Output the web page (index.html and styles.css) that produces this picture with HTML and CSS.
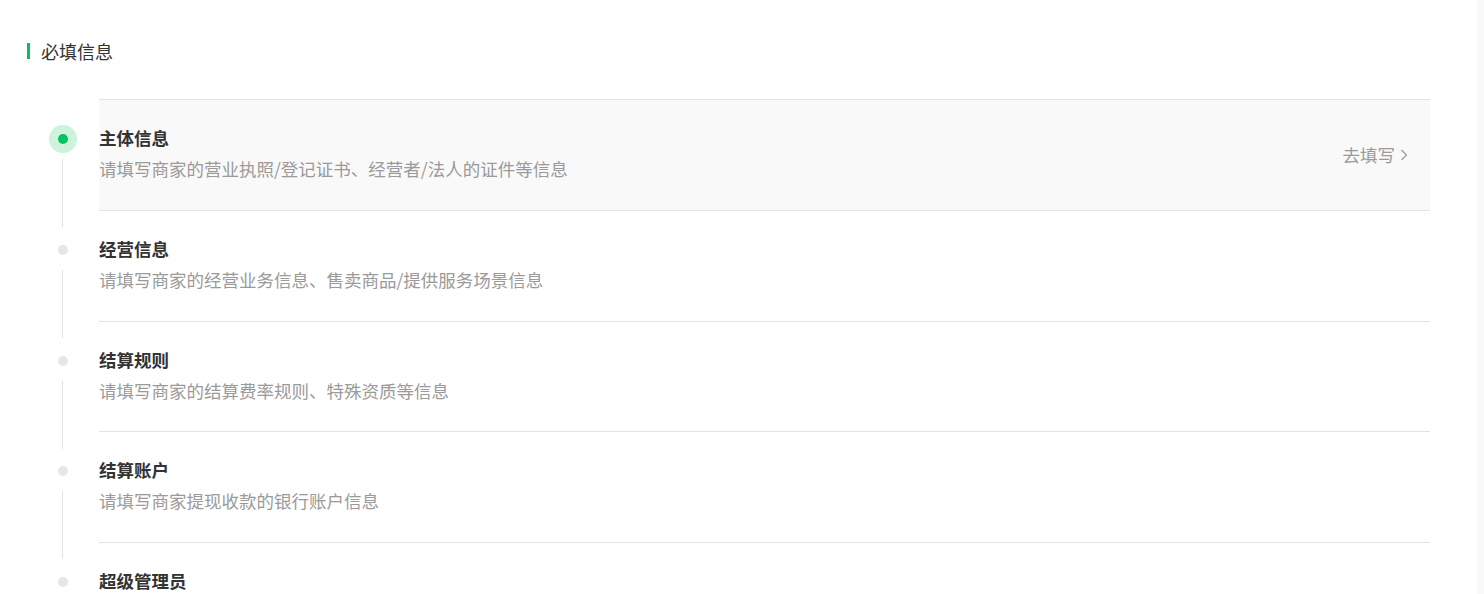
FILE: index.html
```html
<!DOCTYPE html>
<html lang="zh-CN">
<head>
<meta charset="utf-8">
<title>必填信息</title>
<link rel="stylesheet" href="styles.css">
</head>
<body>
<div class="page">
  <main class="main">
    <h2 class="section-title">必填信息</h2>
    <ul class="steps">
      <li class="step step-active">
        <div class="rail"><span class="dot-wrap"><span class="dot"></span></span><span class="line"></span></div>
        <div class="body">
          <div class="text">
            <div class="title">主体信息</div>
            <div class="desc">请填写商家的营业执照/登记证书、经营者/法人的证件等信息</div>
          </div>
          <a class="action">去填写<svg class="chev" width="8" height="12" viewBox="0 0 8 12"><path d="M1.5 1 L6.5 6 L1.5 11" fill="none" stroke="#9a9a9a" stroke-width="1.2"/></svg></a>
        </div>
      </li>
      <li class="step">
        <div class="rail"><span class="dot-wrap"><span class="dot"></span></span><span class="line"></span></div>
        <div class="body">
          <div class="text">
            <div class="title">经营信息</div>
            <div class="desc">请填写商家的经营业务信息、售卖商品/提供服务场景信息</div>
          </div>
        </div>
      </li>
      <li class="step">
        <div class="rail"><span class="dot-wrap"><span class="dot"></span></span><span class="line"></span></div>
        <div class="body">
          <div class="text">
            <div class="title">结算规则</div>
            <div class="desc">请填写商家的结算费率规则、特殊资质等信息</div>
          </div>
        </div>
      </li>
      <li class="step">
        <div class="rail"><span class="dot-wrap"><span class="dot"></span></span><span class="line"></span></div>
        <div class="body">
          <div class="text">
            <div class="title">结算账户</div>
            <div class="desc">请填写商家提现收款的银行账户信息</div>
          </div>
        </div>
      </li>
      <li class="step">
        <div class="rail"><span class="dot-wrap"><span class="dot"></span></span><span class="line"></span></div>
        <div class="body">
          <div class="text">
            <div class="title">超级管理员</div>
            <div class="desc">请填写商家的超级管理员信息</div>
          </div>
        </div>
      </li>
    </ul>
  </main>
  <div class="scroll-strip"></div>
</div>
</body>
</html>
```

FILE: styles.css
```css
* { box-sizing: border-box; }
html, body { margin: 0; padding: 0; background: #fff; }
body {
  font-family: "Noto Sans CJK SC", "Noto Sans", sans-serif;
  color: #333;
  overflow: hidden;
  height: 594px;
}
.page {
  display: flex;
  height: 594px;
}
.main {
  flex: 1;
  padding: 38px 47px 0 27px;
  overflow: hidden;
}
.scroll-strip {
  width: 7px;
  background: #f9f9f9;
}
.section-title {
  margin: 0 0 35px;
  display: flex;
  align-items: center;
  gap: 11px;
  font-size: 18px;
  font-weight: normal;
  line-height: 26px;
  color: #333;
}
.section-title::before {
  content: "";
  width: 3px;
  height: 16px;
  background: #07c160;
}
.steps {
  list-style: none;
  margin: 0;
  padding: 0;
}
.step {
  display: flex;
  height: 110.75px;
}
.rail {
  width: 72px;
  flex: none;
  display: flex;
  flex-direction: column;
  align-items: center;
  padding-top: 26px;
}
.dot-wrap {
  width: 28px;
  height: 28px;
  border-radius: 50%;
  display: flex;
  align-items: center;
  justify-content: center;
  flex: none;
}
.dot {
  width: 10px;
  height: 10px;
  border-radius: 50%;
  background: #e6e6e6;
}
.step-active .dot-wrap { background: #cdf3db; }
.step-active .dot { background: #07c160; }
.line {
  width: 1px;
  height: 68px;
  margin-top: 6px;
  margin-left: -1px;
  background: #e2e2e2;
  flex: none;
  position: relative;
  z-index: 1;
}
.body {
  flex: 1;
  border-top: 1px solid #e3e3e3;
  display: flex;
  align-items: center;
  justify-content: space-between;
  padding-right: 22px;
}
.step-active .body { background: #f9f9f9; }
.text {
  align-self: flex-start;
  padding-top: 25px;
}
.title {
  font-size: 17.5px;
  font-weight: bold;
  line-height: 26px;
  color: #333;
}
.desc {
  margin-top: 5px;
  font-size: 17.5px;
  line-height: 26px;
  color: #9a9a9a;
}
.action {
  display: flex;
  align-items: center;
  gap: 5px;
  font-size: 17.5px;
  line-height: 26px;
  color: #9a9a9a;
  cursor: pointer;
}
.chev { display: block; }
```
